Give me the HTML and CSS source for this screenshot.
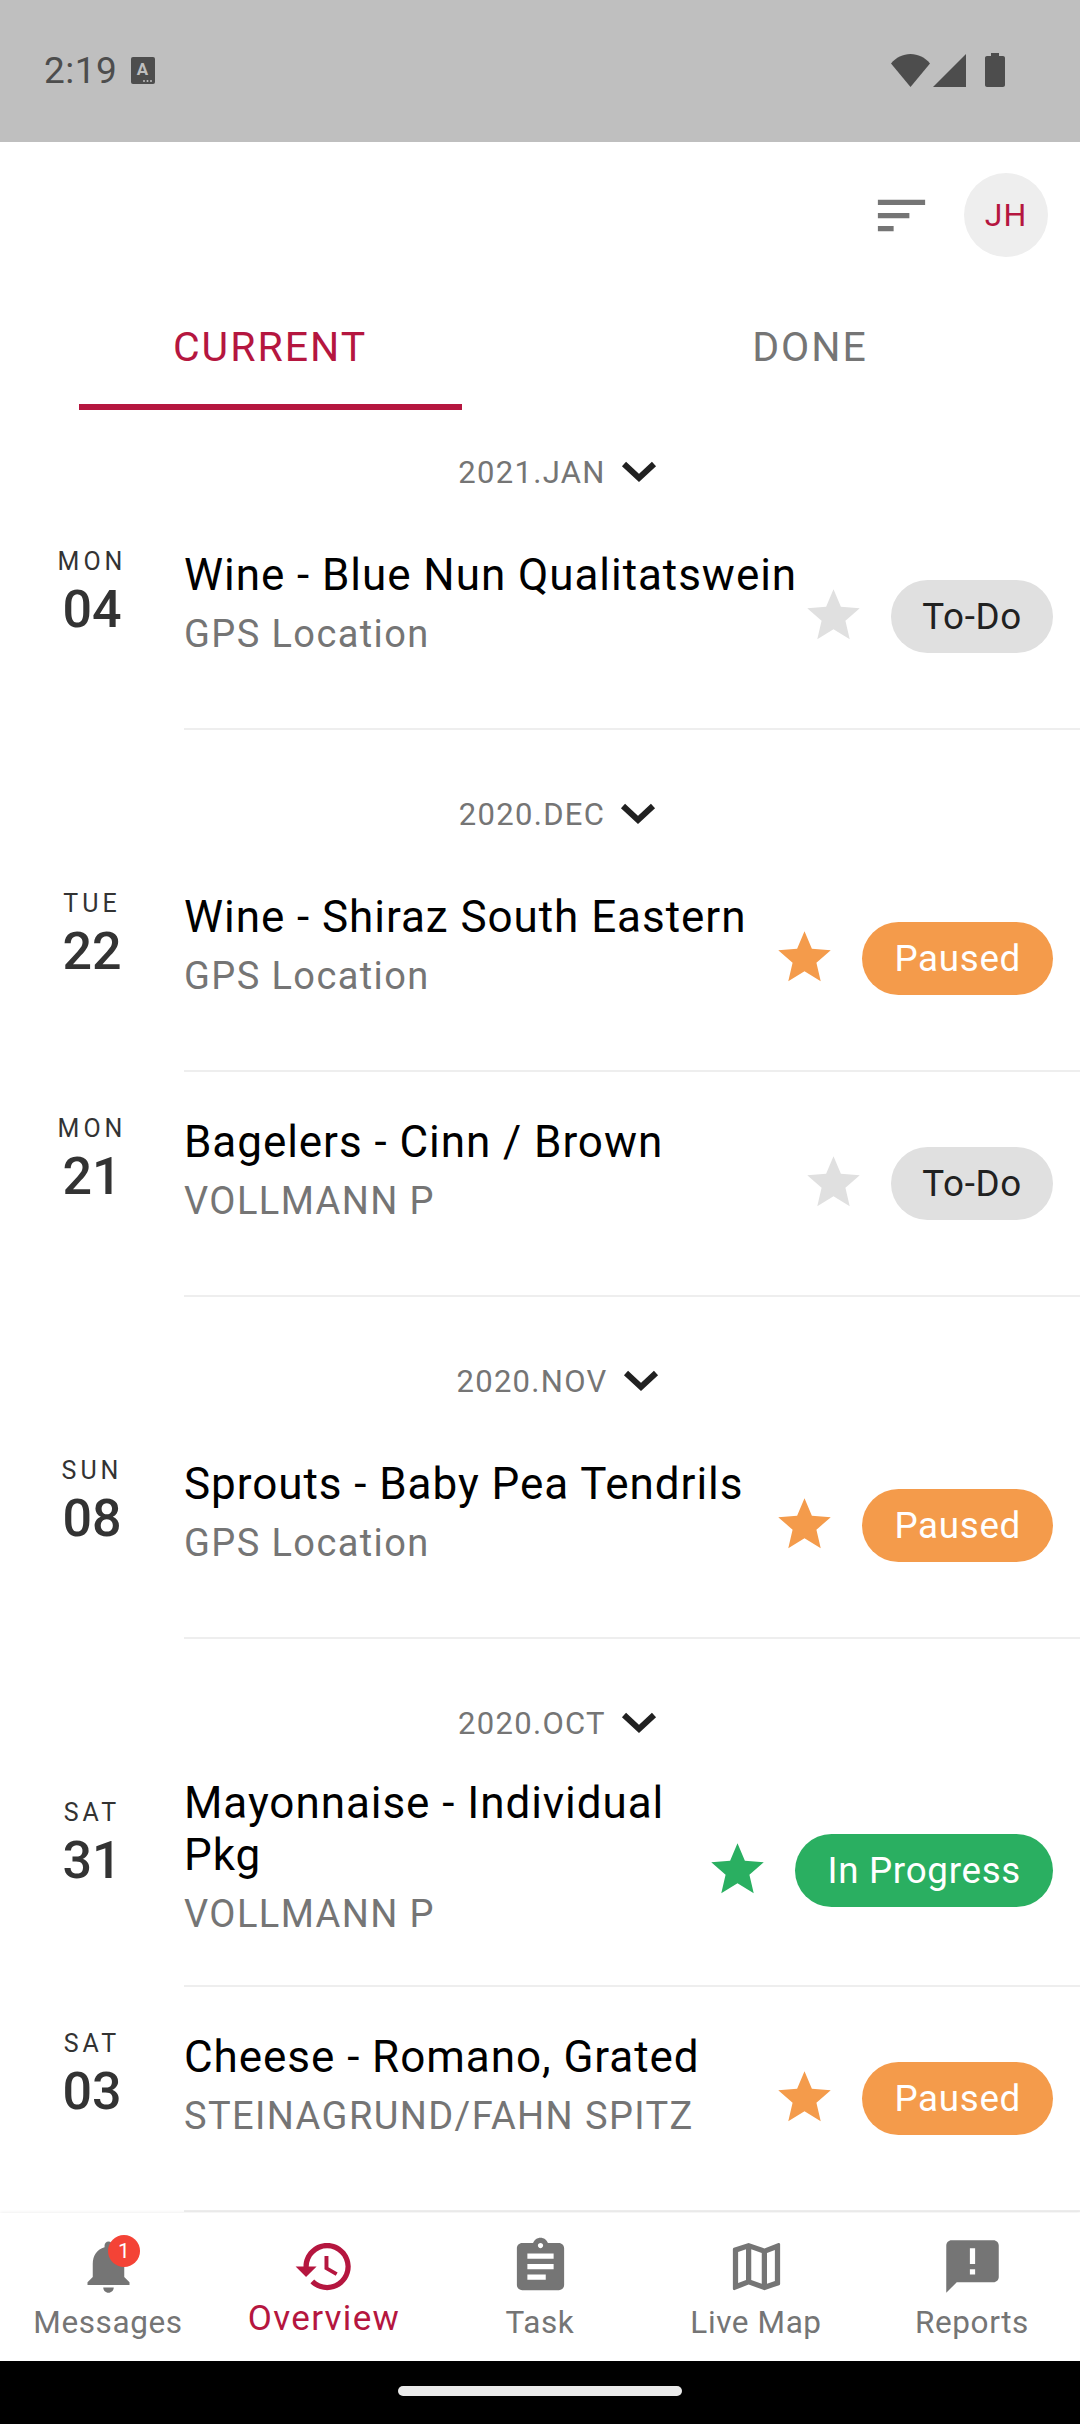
FILE: index.html
```html
<!DOCTYPE html>
<html lang="en">
<head>
    <meta charset="UTF-8">
    <meta name="viewport" content="width=device-width, initial-scale=1.0">
    <title>Overview</title>
    <link rel="stylesheet" href="styles.css">
</head>
<body>
    <!-- shared icons -->
    <svg class="sprite" xmlns="http://www.w3.org/2000/svg">
        <symbol id="star" viewBox="0 0 24 24"><path d="M12 17.27L18.18 21l-1.64-7.03L22 9.24l-7.19-.61L12 2 9.19 8.63 2 9.24l5.46 4.73L5.82 21z"/></symbol>
        <symbol id="chevron" viewBox="0 0 50 30"><path d="M10 6l15 14L40 6" fill="none" stroke="#212121" stroke-width="6"/></symbol>
    </svg>

    <div class="statusbar">
        <span class="time">2:19</span>
        <svg class="status-a" viewBox="0 0 24 27">
            <rect width="24" height="27" rx="2" fill="#4d4d4d"/>
            <text x="11.500" y="18" text-anchor="middle" font-family="Roboto, sans-serif" font-size="17" font-weight="700" fill="#bfbfbf">A</text>
            <circle cx="13" cy="24" r="1" fill="#bfbfbf"/><circle cx="16.500" cy="24" r="1" fill="#bfbfbf"/><circle cx="20" cy="24" r="1" fill="#bfbfbf"/>
        </svg>
        <div class="status-icons">
            <svg class="wifi" viewBox="0 0 39 33"><path d="M19.500 33L0 9.500C5 3.500 12 0 19.500 0S34 3.500 39 9.500z"/></svg>
            <svg class="signal" viewBox="0 0 33 33"><path d="M33 0v33H0z"/></svg>
            <svg class="battery" viewBox="0 0 20 34"><path d="M6 0h8v3h4c1.100 0 2 .9 2 2v27c0 1.100-.9 2-2 2H2c-1.100 0-2-.9-2-2V5c0-1.100.9-2 2-2h4z"/></svg>
        </div>
    </div>

    <div class="appbar">
        <svg class="sort-icon" viewBox="0 0 24 24"><path d="M3 18h6v-2H3v2zM3 6v2h18V6H3zm0 7h12v-2H3v2z"/></svg>
        <div class="avatar">JH</div>
    </div>

    <div class="tabs">
        <div class="tab active"><span class="tab-label">CURRENT</span></div>
        <div class="tab"><span class="tab-label">DONE</span></div>
    </div>

    <div class="list">
        <div class="month"><span>2021.JAN</span><svg class="chevron"><use href="#chevron"/></svg></div>
        <div class="row">
            <div class="date"><div class="day">MON</div><div class="num">04</div></div>
            <div class="main">
                <div class="info"><div class="title">Wine - Blue Nun Qualitatswein</div><div class="sub">GPS Location</div></div>
                <svg class="star todo"><use href="#star"/></svg>
                <div class="pill todo">To-Do</div>
            </div>
        </div>

        <div class="month"><span>2020.DEC</span><svg class="chevron"><use href="#chevron"/></svg></div>
        <div class="row">
            <div class="date"><div class="day">TUE</div><div class="num">22</div></div>
            <div class="main">
                <div class="info"><div class="title">Wine - Shiraz South Eastern</div><div class="sub">GPS Location</div></div>
                <svg class="star paused"><use href="#star"/></svg>
                <div class="pill paused">Paused</div>
            </div>
        </div>
        <div class="row">
            <div class="date"><div class="day">MON</div><div class="num">21</div></div>
            <div class="main">
                <div class="info"><div class="title">Bagelers - Cinn / Brown</div><div class="sub">VOLLMANN P</div></div>
                <svg class="star todo"><use href="#star"/></svg>
                <div class="pill todo">To-Do</div>
            </div>
        </div>

        <div class="month"><span>2020.NOV</span><svg class="chevron"><use href="#chevron"/></svg></div>
        <div class="row">
            <div class="date"><div class="day">SUN</div><div class="num">08</div></div>
            <div class="main">
                <div class="info"><div class="title">Sprouts - Baby Pea Tendrils</div><div class="sub">GPS Location</div></div>
                <svg class="star paused"><use href="#star"/></svg>
                <div class="pill paused">Paused</div>
            </div>
        </div>

        <div class="month"><span>2020.OCT</span><svg class="chevron"><use href="#chevron"/></svg></div>
        <div class="row">
            <div class="date"><div class="day">SAT</div><div class="num">31</div></div>
            <div class="main">
                <div class="info"><div class="title">Mayonnaise - Individual Pkg</div><div class="sub">VOLLMANN P</div></div>
                <svg class="star progress"><use href="#star"/></svg>
                <div class="pill progress">In Progress</div>
            </div>
        </div>
        <div class="row">
            <div class="date"><div class="day">SAT</div><div class="num">03</div></div>
            <div class="main">
                <div class="info"><div class="title">Cheese - Romano, Grated</div><div class="sub">STEINAGRUND/FAHN SPITZ</div></div>
                <svg class="star paused"><use href="#star"/></svg>
                <div class="pill paused">Paused</div>
            </div>
        </div>
    </div>

    <div class="bottomnav">
        <div class="nav-item">
            <svg class="nav-icon" viewBox="0 0 24 24"><path d="M12 22c1.100 0 2-.9 2-2h-4c0 1.100.89 2 2 2zm6-6v-5c0-3.070-1.640-5.640-4.500-6.320V4c0-.83-.67-1.500-1.500-1.500s-1.500.67-1.500 1.500v.68C7.630 5.360 6 7.920 6 11v5l-2 2v1h16v-1l-2-2z"/></svg>
            <span class="badge">1</span>
            <span class="nav-label">Messages</span>
        </div>
        <div class="nav-item active">
            <svg class="nav-icon" viewBox="0 0 24 24"><path d="M13 3c-4.970 0-9 4.030-9 9H1l3.890 3.890.07.14L9 12H6c0-3.870 3.130-7 7-7s7 3.130 7 7-3.130 7-7 7c-1.930 0-3.680-.79-4.940-2.060l-1.420 1.420C8.270 19.990 10.510 21 13 21c4.970 0 9-4.030 9-9s-4.030-9-9-9zm-1 5v5l4.280 2.540.72-1.210-3.500-2.080V8H12z"/></svg>
            <span class="nav-label">Overview</span>
        </div>
        <div class="nav-item">
            <svg class="nav-icon" viewBox="0 0 24 24"><path d="M19 3h-4.180C14.400 1.840 13.300 1 12 1c-1.300 0-2.400.84-2.820 2H5c-1.100 0-2 .9-2 2v14c0 1.100.9 2 2 2h14c1.100 0 2-.9 2-2V5c0-1.100-.9-2-2-2zm-7 0c.55 0 1 .45 1 1s-.45 1-1 1-1-.45-1-1 .45-1 1-1zm2 14H7v-2h7v2zm3-4H7v-2h10v2zm0-4H7V7h10v2z"/></svg>
            <span class="nav-label">Task</span>
        </div>
        <div class="nav-item">
            <svg class="nav-icon" viewBox="0 0 24 24"><path d="M20.500 3l-.16.03L15 5.100 9 3 3.360 4.900c-.21.07-.36.25-.36.48V20.500c0 .28.22.5.5.5l.16-.03L9 18.900l6 2.100 5.640-1.900c.21-.07.36-.25.36-.48V3.500c0-.28-.22-.5-.5-.5zM10 5.470l4 1.400v11.660l-4-1.400V5.470zm-5 .99l3-1.010v11.700l-3 1.160V6.460zm14 11.080l-3 1.010V6.860l3-1.160v11.840z"/></svg>
            <span class="nav-label">Live Map</span>
        </div>
        <div class="nav-item">
            <svg class="nav-icon" viewBox="0 0 24 24"><path d="M20 2H4c-1.100 0-1.990.9-1.990 2L2 22l4-4h14c1.100 0 2-.9 2-2V4c0-1.100-.9-2-2-2zm-7 9h-2V5h2v6zm0 4h-2v-2h2v2z"/></svg>
            <span class="nav-label">Reports</span>
        </div>
    </div>

    <div class="gesturebar"><div class="handle"></div></div>
</body>
</html>
```
FILE: styles.css
```css
html, body {
    margin: 0;
    padding: 0;
    height: 100%;
}

body {
    display: flex;
    flex-direction: column;
    height: 2424px;
    overflow: hidden;
    background-color: #fff;
    font-family: Roboto, sans-serif;
}

.sprite {
    display: none;
}

/* Status bar */
.statusbar {
    display: flex;
    align-items: center;
    flex: none;
    height: 142px;
    box-sizing: border-box;
    padding: 0 75px 2px 44px;
    background-color: #bfbfbf;
    color: #4d4d4d;
}

.time {
    font-size: 37px;
    letter-spacing: 0.5px;
}

.status-a {
    width: 24px;
    height: 27px;
    margin-left: 14px;
}

.status-icons {
    display: flex;
    align-items: center;
    gap: 3px;
    margin-left: auto;
    fill: #4d4d4d;
}

.wifi {
    width: 39px;
    height: 33px;
}

.signal {
    width: 33px;
    height: 33px;
}

.battery {
    width: 20px;
    height: 34px;
    margin-left: 16px;
}

/* App bar */
.appbar {
    display: flex;
    align-items: center;
    justify-content: flex-end;
    gap: 31px;
    flex: none;
    height: 146px;
    padding-right: 32px;
}

.sort-icon {
    width: 63px;
    height: 63px;
    fill: #757575;
}

.avatar {
    width: 84px;
    height: 84px;
    border-radius: 50%;
    background-color: #eee;
    color: #b5163f;
    font-size: 32px;
    letter-spacing: 1px;
    line-height: 84px;
    text-align: center;
}

/* Tabs */
.tabs {
    display: flex;
    flex: none;
    height: 122px;
}

.tab {
    display: flex;
    flex: 1;
    justify-content: center;
    color: #757575;
}

.tab-label {
    width: 383px;
    height: 116px;
    border-bottom: 6px solid transparent;
    font-size: 41px;
    letter-spacing: 2px;
    line-height: 118px;
    text-align: center;
}

.tab.active {
    color: #b5163f;
}

.tab.active .tab-label {
    border-bottom-color: #b5163f;
}

/* List */
.list {
    flex: 1;
    min-height: 0;
    overflow: hidden;
}

.month {
    display: flex;
    align-items: center;
    justify-content: center;
    height: 65px;
    padding-top: 52px;
    padding-left: 42px;
    color: #757575;
    font-size: 31px;
    letter-spacing: 1.300px;
}

.month:first-child {
    padding-top: 30px;
}

.chevron {
    width: 50px;
    height: 30px;
    margin-left: 8px;
}

.row {
    display: flex;
}

.date {
    flex: none;
    width: 184px;
    padding-top: 41px;
    text-align: center;
}

.day {
    color: #333;
    font-size: 25px;
    letter-spacing: 4px;
    line-height: 32px;
}

.num {
    margin-top: 2px;
    color: #333;
    font-size: 52px;
    font-weight: 500;
    line-height: 60px;
}

.main {
    display: flex;
    flex: 1;
    align-items: center;
    min-width: 0;
    min-height: 225px;
    box-sizing: border-box;
    padding: 21px 27px 21px 0;
    border-bottom: 2px solid #eee;
}

.info {
    flex: 1;
    min-width: 0;
    margin-bottom: 25px;
}

.title {
    color: #000;
    font-size: 44px;
    letter-spacing: 0.950px;
    line-height: 52px;
}

.sub {
    margin-top: 8px;
    color: #757575;
    font-size: 38px;
    letter-spacing: 1.400px;
    line-height: 50px;
}

.star {
    flex: none;
    width: 63px;
    height: 63px;
    margin-right: 26px;
    margin-bottom: 2px;
}

.star.todo {
    fill: #e0e0e0;
}

.star.paused {
    fill: #f49b4b;
}

.star.progress {
    fill: #2aaf61;
}

.pill {
    flex: none;
    padding: 0 32px;
    border-radius: 37px;
    font-size: 36.750px;
    letter-spacing: 0.700px;
    line-height: 73px;
}

.pill.todo {
    padding: 0 31px;
    background-color: #e0e0e0;
    color: #212121;
}

.pill.paused {
    background-color: #f49b4b;
    color: #fff;
}

.pill.progress {
    background-color: #2aaf61;
    color: #fff;
}

/* Bottom nav */
.bottomnav {
    display: flex;
    flex: none;
    height: 148px;
    background-color: #fff;
    box-shadow: 0 -1px 3px rgba(0, 0, 0, 0.06);
}

.nav-item {
    position: relative;
    display: flex;
    flex: 1;
    flex-direction: column;
    align-items: center;
    padding-top: 22px;
    color: #757575;
}

.nav-icon {
    width: 63px;
    height: 63px;
    fill: #757575;
}

.nav-label {
    font-size: 31.500px;
    letter-spacing: 0.600px;
    line-height: 50px;
}

.nav-item.active {
    color: #b5163f;
}

.nav-item.active .nav-icon {
    fill: #b5163f;
}

.nav-item.active .nav-label {
    margin-top: -4px;
    font-size: 35px;
    letter-spacing: 1.300px;
}

.badge {
    position: absolute;
    top: 22px;
    left: 108px;
    width: 32px;
    height: 32px;
    border-radius: 50%;
    background-color: #f44336;
    color: #fff;
    font-size: 21px;
    line-height: 32px;
    text-align: center;
}

/* Gesture bar */
.gesturebar {
    display: flex;
    align-items: center;
    justify-content: center;
    flex: none;
    height: 63px;
    padding-bottom: 4px;
    box-sizing: border-box;
    background-color: #000;
}

.handle {
    width: 284px;
    height: 10px;
    border-radius: 5px;
    background-color: #eaeaea;
}
```
